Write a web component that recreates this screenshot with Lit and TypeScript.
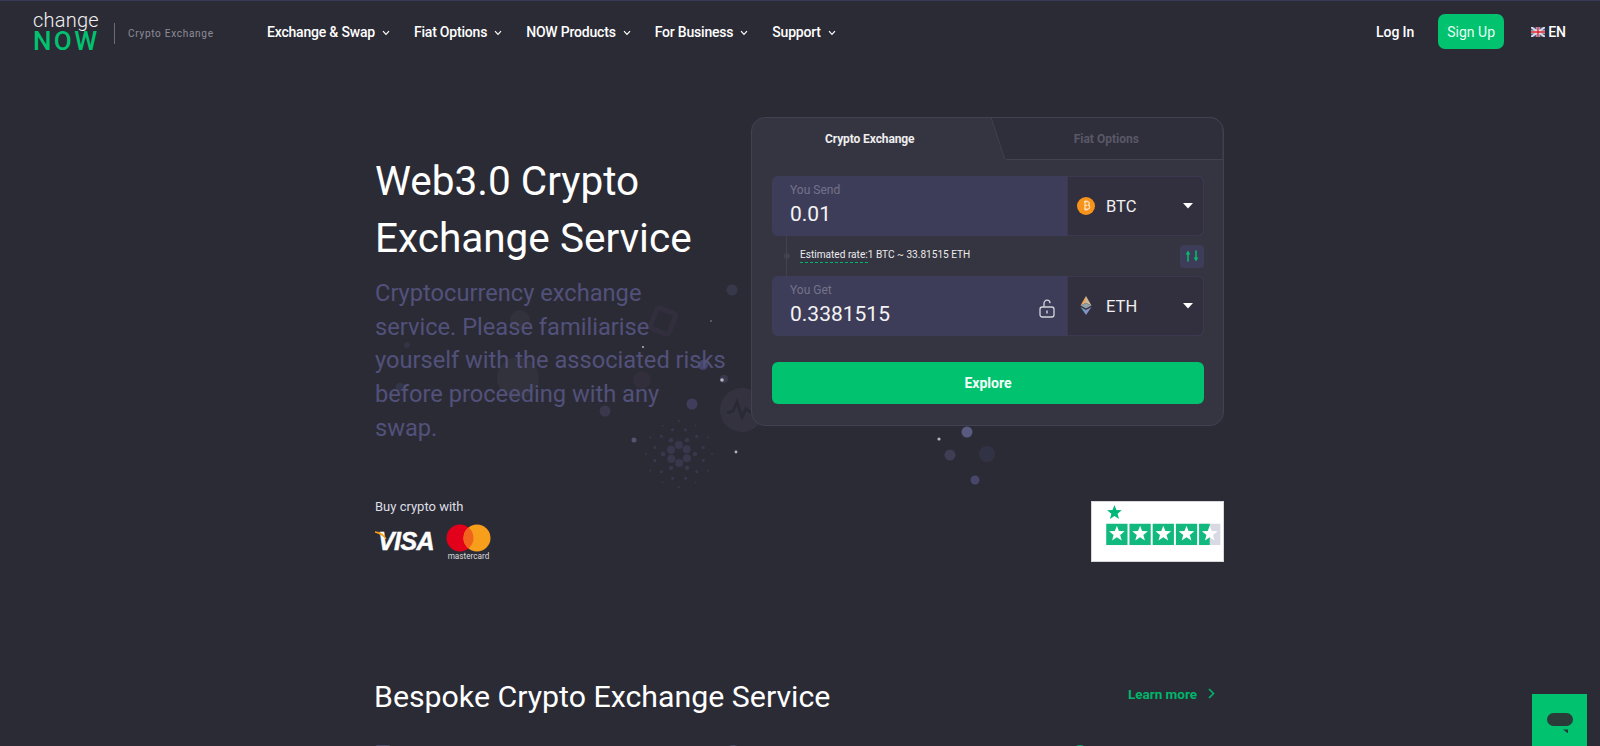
import { LitElement, html, css, svg } from "lit";
import { customElement } from "lit/decorators.js";

const NAV = ["Exchange & Swap", "Fiat Options", "NOW Products", "For Business", "Support"];

const chevron = html`<svg class="chev" width="8" height="6" viewBox="0 0 8 6"><path d="M1 1.2 4 4.4 7 1.2" fill="none" stroke="#fff" stroke-width="1.2"/></svg>`;

const star = (cx: number, cy: number, r: number, fill: string) => {
  const pts: string[] = [];
  for (let i = 0; i < 10; i++) {
    const rad = i % 2 === 0 ? r : r * 0.42;
    const a = -Math.PI / 2 + (i * Math.PI) / 5;
    pts.push(`${(cx + rad * Math.cos(a)).toFixed(2)},${(cy + rad * Math.sin(a)).toFixed(2)}`);
  }
  return svg`<polygon points=${pts.join(" ")} fill=${fill}/>`;
};

const BLOBS: [number, number, number, string][] = [
  [732, 290, 5.5, "#38374b"], [518, 378, 21, "#32313e"], [605, 411, 5.5, "#3a394e"], [692, 404, 5.5, "#3f3e5c"],
  [742, 410, 22, "#343341"], [634, 440, 2.5, "#54536f"], [703, 365, 5, "#45446a"], [400, 387, 4, "#36354a"],
  [520, 320, 10, "#31303c"], [642, 380, 9, "#302f3b"], [967, 432, 5.5, "#585a80"], [950, 455, 5.5, "#3d3c53"],
  [987, 454, 8, "#333245"], [975, 480, 4.5, "#47466b"], [724, 379, 4, "#3a394e"], [407, 345, 3, "#343345"],
  [711, 321, 1, "#66657c"],
];
const SPARKS: [number, number, number][] = [[736, 452, 1.4], [722, 380, 1.8], [643, 347, 1], [939, 439, 1.6]];

const cardano = () => {
  const out = [];
  const cx = 679, cy = 454;
  const rings: [number, number, number, number][] = [
    [9, 6, 4, 0.5], [16, 6, 2.2, 0], [25, 12, 1.5, 0.26], [33, 12, .9, 0],
  ];
  for (const [d, n, r, off] of rings) {
    for (let i = 0; i < n; i++) {
      const a = off + (i * 2 * Math.PI) / n;
      out.push(svg`<circle cx=${cx + d * Math.cos(a)} cy=${cy + d * Math.sin(a)} r=${r} fill="#39384e"/>`);
    }
  }
  return out;
};

@customElement("app-root")
export class AppRoot extends LitElement {
  static styles = css`
    :host { display: block; }
    * { box-sizing: border-box; }
    .page { position: relative; height: 746px; overflow: hidden; background: #2b2b36; color: #fff;
      font-family: Roboto, "Noto Sans", sans-serif; border-top: 1px solid #38385a; }
    .bg { position: absolute; left: 0; top: -1px; }
    .content { position: relative; }
    header { height: 61px; display: flex; align-items: center; padding: 0 34px 0 33px; }
    .logo { width: 67px; display: flex; flex-direction: column; margin-top: -3px; }
    .logo .a { font-size: 20px; font-weight: 300; letter-spacing: .25px; line-height: 20px; color: #f1f1f1; margin-bottom: 1px; }
    .logo .b { font-size: 26px; font-weight: 500; letter-spacing: 2.4px; line-height: 20px; color: #00c26f; }
    .div { width: 1px; height: 21px; background: #6a6a74; margin: 3px 13px 0 14px; }
    .tag { font-size: 10px; letter-spacing: .72px; color: #8d8d97; margin-top: 4px; width: 139px; white-space: nowrap; }
    nav { display: flex; gap: 24px; font-size: 14px; font-weight: 500; letter-spacing: -.2px; }
    nav a { display: flex; align-items: center; gap: 7px; white-space: nowrap; }
    .chev { margin-top: 3px; }
    .right { margin-left: auto; display: flex; align-items: center; font-size: 14px; font-weight: 500; }
    .login { letter-spacing: -.1px; }
    .signup { width: 66px; height: 35px; border-radius: 7px; background: #00c26f; color: #e9fff4;
      display: flex; align-items: center; justify-content: center; margin: 0 27px 0 24px; font-weight: 400; }
    .lang { display: flex; align-items: center; gap: 3px; }
    .wrap { width: 849px; margin-left: 375px; }
    .hero { display: flex; justify-content: space-between; margin-top: 55px; margin-bottom: 55px; }
    .left { padding-top: 36px; }
    h1 { margin: 0 0 11px; font-size: 40.5px; line-height: 56.5px; font-weight: 400; white-space: nowrap; }
    .sub { margin: 0; font-size: 23.65px; line-height: 33.7px; color: #52517a; width: 352px; white-space: nowrap; }
    .card { width: 473px; height: 309px; background: #353541; border: 1px solid #41414f; border-radius: 14px;
      padding: 0 19px 0 20px; position: relative; }
    .tabs { display: flex; height: 42px; margin: 0 -19px 16px -20px; position: relative; }
    .tabshape { position: absolute; left: 237px; top: -1px; }
    .tab { font-size: 12px; font-weight: 700; display: flex; align-items: center; justify-content: center; position: relative; padding-bottom: 1px; }
    .tab.on { width: 236px; color: #eee; letter-spacing: -.1px; }
    .tab.off { width: 234px; margin-left: 2px; color: #595867; }
    .field { height: 60px; border-radius: 6px; background: #3e3d59; display: flex; }
    .input { flex: 1; padding: 7px 18px 0; position: relative; }
    .lbl { font-size: 12px; line-height: 14px; color: #73728a; }
    .val { font-size: 21px; line-height: 26px; margin-top: 4px; color: #f4f4f4; }
    .lock { position: absolute; right: 13px; top: 23px; }
    .sel { width: 135px; margin: 1px 1px 1px 0; background: #32303f; border-radius: 0 5px 5px 0; display: flex; align-items: center;
      padding: 0 0 0 9px; font-size: 16.5px; font-weight: 400; color: #f0f0f0; box-shadow: 0 0 0 1px #3a3950; }
    .sel .name { margin-left: 11px; flex: 1; }
    .sel .car { margin-right: 10px; }
    .sel svg { display: block; }
    .rate { height: 40px; position: relative; display: flex; align-items: center; padding-left: 28px; font-size: 10.1px; color: #ececec; }
    .rate .u { border-bottom: 1px dashed #00b56a; padding-bottom: 2px; position: relative; }
    .rate .t { display: flex; }
    .tline { position: absolute; left: 14px; top: 0; height: 40px; width: 1px; background: #41414f; }
    .tdot { position: absolute; left: 12px; top: 17px; width: 6px; height: 6px; border-radius: 50%; background: #41414f; }
    .swap { margin-left: auto; width: 24px; height: 23px; border-radius: 4px; background: #3e3d59; display: flex; align-items: center; justify-content: center; }
    .btn { display: flex; align-items: center; justify-content: center; height: 42px; margin-top: 26px; border-radius: 6px; background: #00c26f; font-size: 14px; font-weight: 700; color: #f4fff9; }
    .pay { display: flex; justify-content: space-between; }
    .buy { font-size: 13px; line-height: 15px; color: #dedee2; margin-top: -2px; }
    .logos { display: flex; align-items: flex-start; margin-top: 9px; gap: 7px; }
    .visa { display: block; }
    .tp { width: 133px; height: 61px; background: #fff; border: 1px solid #d6d6dc; display: block; }
    .sec { margin-top: 118px; display: flex; justify-content: space-between; align-items: center; height: 34px; }
    h2 { margin: 0 0 0 -1px; font-size: 30.3px; font-weight: 400; line-height: 34px; white-space: nowrap; }
    .more { display: flex; align-items: center; gap: 11px; margin: 0 9px 6px 0; font-size: 13.5px; font-weight: 700; color: #00b56a; }
    .peek { display: flex; margin-top: 31px; }
    .p { width: 16px; height: 16px; }
    .p1 { background: #4a4a66; border-radius: 3px; margin-right: 334px; }
    .p2 { background: #4a4a66; border-radius: 50%; margin-right: 331px; }
    .p3 { background: #00a86a; border-radius: 50%; }
    .chat { position: absolute; left: 1532px; top: 693px; width: 55px; height: 52px; background: #00c26f; display: flex; align-items: flex-start; justify-content: center; padding-top: 19px; }
  `;

  private coin(kind: "btc" | "eth") {
    if (kind === "btc") {
      return html`<svg width="18" height="18" viewBox="0 0 18 18">
        <circle cx="9" cy="9" r="9" fill="#f7931a"/>
        <path d="M7 4.6h3c1.6 0 2.3 .8 2.3 1.9 0 .8-.4 1.4-1.2 1.6 1 .2 1.6 .9 1.6 1.9 0 1.4-1 2.2-2.6 2.2H7M8 4.6v8M8.2 8.4h2.2M8.5 3.4v1.2M10 3.4v1.2M8.5 12.4v1.2M10 12.4v1.2" fill="none" stroke="#fbe3c0" stroke-width="1.2"/>
      </svg>`;
    }
    return html`<svg width="18" height="22" viewBox="0 0 18 22">
      <polygon points="9,1 3.5,10.5 9,8" fill="#e8a667"/>
      <polygon points="9,1 14.5,10.5 9,8" fill="#c9b79c"/>
      <polygon points="3.5,10.5 9,8 14.5,10.5 9,13.5" fill="#8fa1a8"/>
      <polygon points="3.5,12 9,15 9,20" fill="#6f9ac2"/>
      <polygon points="14.5,12 9,15 9,20" fill="#8d8fc0"/>
    </svg>`;
  }

  private caret = html`<svg class="car" width="10" height="6" viewBox="0 0 10 6"><polygon points="0,0 10,0 5,5.5" fill="#fff"/></svg>`;

  render() {
    return html`
      <div class="page">
        <svg class="bg" width="1600" height="746" viewBox="0 0 1600 746">
          <defs><filter id="soft" x="-5%" y="-5%" width="110%" height="110%"><feGaussianBlur stdDeviation="0.7"/></filter></defs>
          <g filter="url(#soft)">
            ${BLOBS.map(([x, y, r, c]) => svg`<circle cx=${x} cy=${y} r=${r} fill=${c}/>`)}
            ${cardano()}
            <rect x="653" y="310" width="20" height="22" rx="3" transform="rotate(22 663 321)" fill="none" stroke="#312f3d" stroke-width="5"/>
            <path d="M727 413l6 -2 4 -9 5 15 4 -8 6 4" fill="none" stroke="#2b2b36" stroke-width="3"/>
          </g>
          ${SPARKS.map(([x, y, r]) => svg`<circle cx=${x} cy=${y} r=${r} fill="#b4b4c4"/>`)}
        </svg>
        <div class="content">
          <header>
            <div class="logo"><span class="a">change</span><span class="b">NOW</span></div>
            <div class="div"></div>
            <div class="tag">Crypto Exchange</div>
            <nav>${NAV.map((n) => html`<a>${n}${chevron}</a>`)}</nav>
            <div class="right">
              <span class="login">Log In</span>
              <span class="signup">Sign Up</span>
              <span class="lang">
                <svg width="14" height="10" viewBox="0 0 14 10">
                  <rect width="14" height="10" fill="#4a4f78"/>
                  <path d="M0 0l14 10M14 0L0 10" stroke="#d9d9e2" stroke-width="2"/>
                  <path d="M7 0v10M0 5h14" stroke="#e6e6ee" stroke-width="3"/>
                  <path d="M7 0v10M0 5h14" stroke="#e0202c" stroke-width="1.4"/>
                </svg>
                EN
              </span>
            </div>
          </header>
          <div class="wrap">
            <div class="hero">
              <div class="left">
                <h1>Web3.0 Crypto<br />Exchange Service</h1>
                <p class="sub">Cryptocurrency exchange<br />service. Please familiarise<br />yourself with the associated risks<br />before proceeding with any<br />swap.</p>
              </div>
              <div class="card">
                <div class="tabs">
                  <svg class="tabshape" width="235" height="43" viewBox="0 0 235 43">
                    <path d="M2 .5H221a13 13 0 0 1 13 13V42.5H17.5Q16 42.5 15.4 41L2 .5Z" fill="#2f2f3b" stroke="#41414f"/>
                  </svg>
                  <div class="tab on">Crypto Exchange</div>
                  <div class="tab off">Fiat Options</div>
                </div>
                <div class="field">
                  <div class="input"><div class="lbl">You Send</div><div class="val">0.01</div></div>
                  <div class="sel">${this.coin("btc")}<span class="name">BTC</span>${this.caret}</div>
                </div>
                <div class="rate">
                  <i class="tline"></i><i class="tdot"></i>
                  <div class="t"><span class="u">Estimated rate:</span><span>1 BTC ~ 33.81515 ETH</span></div>
                  <div class="swap">
                    <svg width="14" height="12" viewBox="0 0 14 12">
                      <path d="M3 11.5V4" stroke="#00c26f" stroke-width="1.5"/><polygon points="0.8,4.5 3,.5 5.2,4.5" fill="#00c26f"/>
                      <path d="M11 .5V8" stroke="#00c26f" stroke-width="1.5"/><polygon points="8.8,7.5 11,11.5 13.2,7.5" fill="#00c26f"/>
                    </svg>
                  </div>
                </div>
                <div class="field">
                  <div class="input">
                    <div class="lbl">You Get</div><div class="val">0.3381515</div>
                    <svg class="lock" width="16" height="19" viewBox="0 0 16 19">
                      <path d="M5 8V4.5C5 2.5 6.4 1.2 8 1.2S11 2.5 11 4.2" fill="none" stroke="#d4d4da" stroke-width="1.3"/>
                      <rect x="1" y="8" width="14" height="10" rx="2.2" fill="none" stroke="#d4d4da" stroke-width="1.3"/>
                      <rect x="7.3" y="11.5" width="1.4" height="3" fill="#d4d4da"/>
                    </svg>
                  </div>
                  <div class="sel">${this.coin("eth")}<span class="name">ETH</span>${this.caret}</div>
                </div>
                <div class="btn">Explore</div>
              </div>
            </div>
            <div class="pay">
              <div>
                <div class="buy">Buy crypto with</div>
                <div class="logos">
                  <svg class="visa" width="64" height="34" viewBox="0 0 64 34">
                    <text x="3" y="27" font-family="Liberation Sans, sans-serif" font-size="25" font-weight="700" font-style="italic" fill="#fff" stroke="#fff" stroke-width=".5" letter-spacing="-.6">VISA</text>
                    <path d="M0 9C5 9 9 11 11 16 9 13 5 11 0 9Z" fill="#f7a21b" stroke="#f7a21b"/>
                  </svg>
                  <svg width="46" height="39" viewBox="0 0 46 39">
                    <circle cx="14" cy="15" r="13.5" fill="#e2001a"/>
                    <circle cx="31" cy="15" r="13.5" fill="#f79e1b"/>
                    <path d="M22.5 4.5a13.5 13.5 0 0 1 0 21a13.5 13.5 0 0 1 0-21Z" fill="#f1621d"/>
                    <text x="22.5" y="36" text-anchor="middle" font-family="Roboto, sans-serif" font-size="8.2" fill="#ddd">mastercard</text>
                  </svg>
                </div>
              </div>
              <svg class="tp" viewBox="0 0 133 61">
                ${star(22, 11, 8, "#00b67a")}
                ${[0, 1, 2, 3, 4].map((i) => svg`
                  <rect x=${13.5 + i * 24} y="22.5" width="22" height="22" fill=${i === 4 ? "#d9d9e3" : "#12b97f"}/>
                  ${i === 4 ? svg`<rect x="109.5" y="22.5" width="11" height="22" fill="#12b97f"/>` : ""}
                  ${star(24.5 + i * 24, 33, 8.5, "#fff")}
                `)}
              </svg>
            </div>
            <div class="sec">
              <h2>Bespoke Crypto Exchange Service</h2>
              <div class="more">Learn more
                <svg width="7" height="11" viewBox="0 0 7 11"><path d="M1 1l4.5 4.5L1 10" fill="none" stroke="#00b56a" stroke-width="1.6"/></svg>
              </div>
            </div>
            <div class="peek"><i class="p p1"></i><i class="p p2"></i><i class="p p3"></i></div>
          </div>
        </div>
        <div class="chat">
          <svg width="26" height="20" viewBox="0 0 26 20">
            <rect x="0" y="0" width="26" height="13" rx="6.5" fill="#2a3b38"/>
            <polygon points="16,16.5 21,16.5 21,20.5" fill="#2a3b38"/>
          </svg>
        </div>
      </div>
    `;
  }
}
